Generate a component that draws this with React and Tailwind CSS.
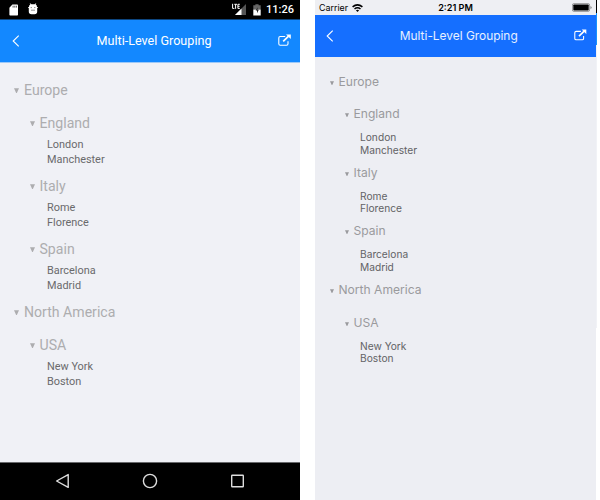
import React from "react";

const groups = [
  {
    name: "Europe",
    countries: [
      { name: "England", cities: ["London", "Manchester"] },
      { name: "Italy", cities: ["Rome", "Florence"] },
      { name: "Spain", cities: ["Barcelona", "Madrid"] },
    ],
  },
  {
    name: "North America",
    countries: [{ name: "USA", cities: ["New York", "Boston"] }],
  },
];

function Caret({ className }) {
  return (
    <svg viewBox="0 0 6 6" preserveAspectRatio="none" className={className} fill="currentColor">
      <path d="M0 0.2H6L3.4 6H2.6Z" />
    </svg>
  );
}

function BackIcon({ className }) {
  return (
    <svg viewBox="0 0 8 12" className={className} fill="none" stroke="currentColor" strokeWidth="1.1">
      <path d="M6.7 0.7L1.2 6L6.7 11.3" />
    </svg>
  );
}

function ShareIcon({ className }) {
  return (
    <svg viewBox="0 0 13 12" className={className} fill="none" stroke="currentColor" strokeWidth="1.1">
      <path d="M7.2 2.5H2.2Q0.8 2.5 0.8 3.9V9.8Q0.8 11.2 2.2 11.2H8.6Q10 11.2 10 9.8V7.2" />
      <path d="M5.2 7.4L10.6 2.2" strokeWidth="1.7" />
      <path d="M8 0.4H12.8V5.1Z" fill="currentColor" stroke="none" />
    </svg>
  );
}

function AndroidPhone() {
  return (
    <div className="flex h-[500px] w-[300px] flex-col bg-[#f0f1f6] font-['Roboto',sans-serif]">
      <div className="flex h-[19px] shrink-0 items-center bg-black pr-[6px] pl-[9px] text-white">
        <svg viewBox="0 0 10 12" className="h-3 w-2.5">
          <path d="M3.4 0.5H8.2Q9 0.5 9 1.3V10.8Q9 11.6 8.2 11.6H1.2Q0.4 11.6 0.4 10.8V3.7Z" fill="#fff" />
          <path d="M4.1 1.7V3.6M5.8 1.7V3.6M7.4 1.7V3.6" stroke="#333" strokeWidth="0.8" />
        </svg>
        <svg viewBox="0 0 10 12" className="mb-px ml-[9px] h-3 w-2.5">
          <path d="M1 4Q1 2 2.4 1.6L1.6 0.6H2.6L3.4 1.3H6.6L7.4 0.6H8.4L7.6 1.6Q9 2 9 4H9.8V5H9.2V8.5Q9.2 11.2 6.5 11.2H3.5Q0.8 11.2 0.8 8.5V5H0.2V4Z" fill="#fff" />
          <path d="M2.6 4.6H4M6 4.6H7.4M3 7.2H7" stroke="#777" strokeWidth="0.8" />
        </svg>
        <div className="flex-1" />
        <svg viewBox="0 0 15 13" className="h-[13px] w-[15px]">
          <path d="M14 1V12H3Z" fill="#555" />
          <path d="M9.5 5.5V12H3Z" fill="#fff" />
          <path d="M0.6 0.8V5.4H2.4M2.3 1.3H5M3.6 1.3V5.8M7.8 1.3H5.9V5.4H7.8M5.9 3.3H7.6" fill="none" stroke="#fff" strokeWidth="1" />
        </svg>
        <svg viewBox="0 0 8 12" className="ml-[6px] h-3 w-2">
          <path d="M0.3 1.3H2.4V0.3H5.6V1.3H7.7V5.5H0.3Z" fill="#666" />
          <path d="M0.3 5.5H7.7V11.5H0.3Z" fill="#fff" />
          <path d="M4.7 3.2L2.6 6.5H4V9.2L5.8 5.8H4.4Z" fill="#222" />
        </svg>
        <span className="ml-[5px] pt-px text-[11px] leading-[18px] font-medium">11:26</span>
      </div>
      <div className="flex h-[44px] shrink-0 items-center justify-between border-t border-b border-t-[#0d4680] border-b-[#9dc9f8] bg-[#1388ff] pr-[9px] pl-[12px] text-white">
        <BackIcon className="h-3 w-2" />
        <span className="pl-[10px] text-[12.6px] leading-4">Multi-Level Grouping</span>
        <ShareIcon className="mb-0.5 h-[12px] w-[13px]" />
      </div>
      <div className="flex-1 pt-[9px]">
        {groups.map((g) => (
          <div key={g.name}>
            <div className="flex h-[33px] items-center pt-1 pl-[14px] text-[14.1px] text-[#adadaf]">
              <Caret className="mr-[5px] mb-px h-[5px] w-[5px]" />
              {g.name}
            </div>
            {g.countries.map((c) => (
              <div key={c.name}>
                <div className="flex h-[32px] items-center pt-[5px] pl-[30px] text-[14.1px] text-[#adadaf]">
                  <Caret className="mr-[4.5px] mb-px h-[5px] w-[5px]" />
                  {c.name}
                </div>
                <div className="pb-px">
                  {c.cities.map((city) => (
                    <div key={city} className="h-[15px] pl-[47px] text-[10.9px] leading-[15px] text-[#6a6a6c]">
                      {city}
                    </div>
                  ))}
                </div>
              </div>
            ))}
          </div>
        ))}
      </div>
      <div className="flex h-[38px] shrink-0 items-center justify-between border-t border-[#68696c] bg-black px-[55px]">
        <svg viewBox="0 0 15 16" className="mb-px h-4 w-[15px]" fill="none" stroke="#ddd" strokeWidth="1.4" strokeLinejoin="round">
          <path d="M13.2 1.6V14.4L1.6 8Z" />
        </svg>
        <svg viewBox="0 0 16 16" className="mb-px h-4 w-4" fill="none" stroke="#ddd" strokeWidth="1.4">
          <circle cx="8" cy="8" r="6.6" />
        </svg>
        <svg viewBox="0 0 15 16" className="mb-px h-4 w-[15px]" fill="none" stroke="#ddd" strokeWidth="1.4">
          <rect x="1.7" y="2.2" width="11.6" height="11.6" rx="0.5" />
        </svg>
      </div>
    </div>
  );
}

function IosPhone() {
  return (
    <div className="h-[500px] w-[281px] bg-[#edeef3] font-['Inter',sans-serif]">
      <div className="grid h-[15px] grid-cols-3 items-center bg-[#eeeff3] pr-[4px] pl-[4px] text-black">
        <div className="flex items-center">
          <span className="text-[8.9px] leading-[15px]">Carrier</span>
          <svg viewBox="0 0 11 8" className="ml-[4px] h-2 w-[11px]" fill="none" stroke="#000">
            <path d="M0.6 2.9Q5.5 -1.2 10.4 2.9" strokeWidth="1.6" />
            <path d="M2.5 5Q5.5 2.5 8.5 5" strokeWidth="1.5" />
            <path d="M5.5 7.9L3.9 6.3Q5.5 5.1 7.1 6.3Z" fill="#000" stroke="none" />
          </svg>
        </div>
        <span className="text-center text-[9.1px] leading-[15px] font-semibold">2:21 PM</span>
        <svg viewBox="0 0 20 9" className="h-[9px] w-5 justify-self-end">
          <rect x="0.4" y="0.6" width="17.2" height="7.8" rx="1.4" fill="none" stroke="#777" strokeWidth="0.7" />
          <rect x="1.3" y="1.5" width="15.4" height="6" rx="0.7" fill="#000" />
          <path d="M18.5 3V6Q19.6 5.5 19.6 4.5T18.5 3Z" fill="#777" />
        </svg>
      </div>
      <div className="flex h-[42px] items-center justify-between bg-[#156fff] pr-[9px] pl-[11px] text-white">
        <BackIcon className="h-3 w-2" />
        <span className="pl-[9px] text-[11.9px] leading-4 text-white/90">Multi-Level Grouping</span>
        <ShareIcon className="mb-0.5 h-[11.5px] w-[12.5px]" />
      </div>
      <div className="pt-[8px]">
        {groups.map((g) => (
          <div key={g.name}>
            <div className="flex h-[33px] items-center pt-px pl-[14.5px] text-[12.1px] text-[#9a9a9d]">
              <Caret className="mt-px mr-[5px] h-[4px] w-[4px]" />
              {g.name}
            </div>
            {g.countries.map((c) => (
              <div key={c.name}>
                <div className="flex h-[33px] items-center pl-[29.5px] text-[12.1px] text-[#9a9a9d]">
                  <Caret className="mt-px mr-[5px] h-[4px] w-[4px]" />
                  {c.name}
                </div>
                {c.cities.map((city) => (
                  <div key={city} className="h-[12.75px] pl-[45px] text-[10.2px] leading-[13px] text-[#626265]">
                    {city}
                  </div>
                ))}
              </div>
            ))}
          </div>
        ))}
      </div>
    </div>
  );
}

export default function App() {
  return (
    <div className="flex h-[500px] w-[600px] overflow-hidden bg-white">
      <AndroidPhone />
      <div className="w-[15px] shrink-0" />
      <IosPhone />
      <div className="flex w-px flex-col">
        <div className="h-[13px] bg-black" />
        <div className="h-8 bg-[#1691ff]" />
        <div className="h-[283px] bg-[#f1f2f6]" />
      </div>
    </div>
  );
}
